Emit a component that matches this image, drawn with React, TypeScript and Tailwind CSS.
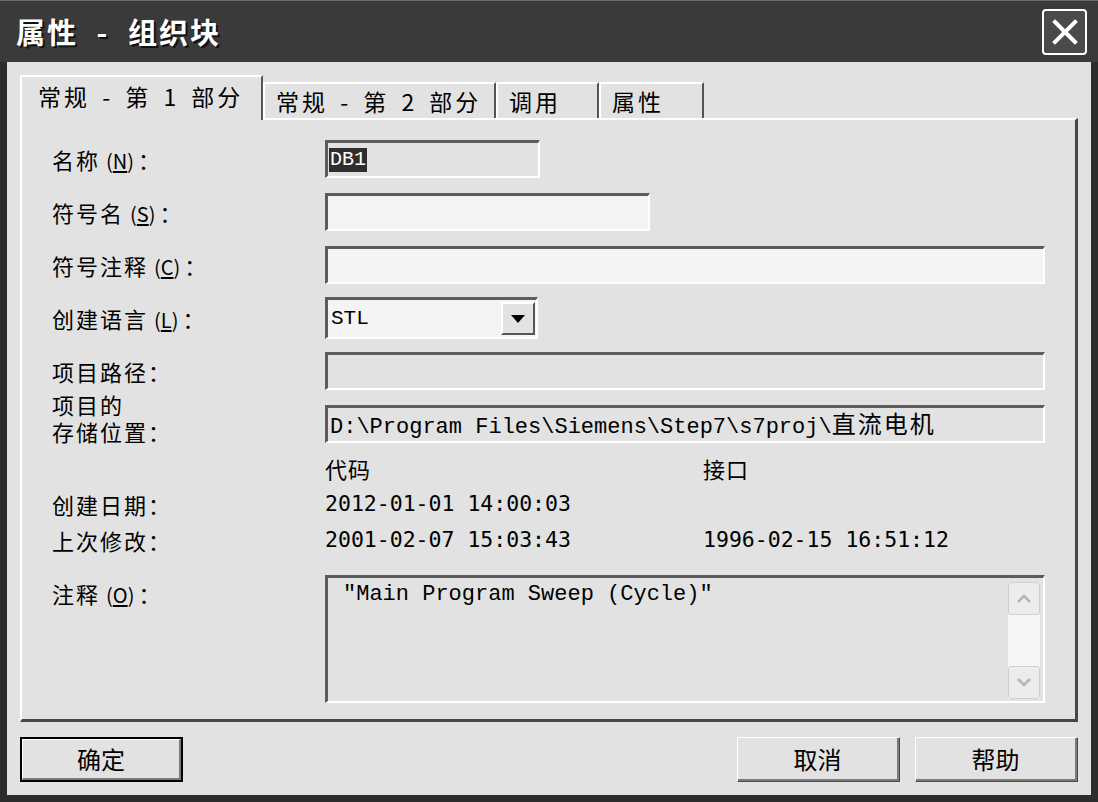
import { ReactNode } from "react";

const cjk = "font-['Noto_Sans_CJK_SC',sans-serif]";
const mono = "font-['Liberation_Mono','Noto_Sans_CJK_SC',monospace]";
const digits = "font-['DejaVu_Sans_Mono','Noto_Sans_CJK_SC',monospace]";

const sunken =
  "border-t-[3px] border-l-[3px] border-b-2 border-r-2 border-t-[#5c5c5c] border-l-[#5c5c5c] border-b-white border-r-white";

function Label({ children }: { children: ReactNode }) {
  return (
    <div className={`w-[273px] shrink-0 text-[22px] leading-none tracking-[2px] text-black ${cjk}`}>
      {children}
    </div>
  );
}

function Key({ k }: { k: string }) {
  return (
    <span className="ml-[6px] mr-[4px] text-[20px] tracking-normal">
      (<span className="underline underline-offset-2">{k}</span>)
    </span>
  );
}

function Row({ children }: { children: ReactNode }) {
  return <div className="flex h-[38px] items-center">{children}</div>;
}

function Btn({ children, primary }: { children: ReactNode; primary?: boolean }) {
  return (
    <button
      className={`flex h-[45px] w-[163px] items-center justify-center bg-[#e2e2e2] text-[24px] text-black ${cjk} ${
        primary ? "border-2 border-black" : "border border-[#4a4a4a] border-t-white border-l-white"
      }`}
    >
      <span
        className={`flex h-full w-full items-center justify-center border-b-2 border-r-2 border-b-[#7a7a7a] border-r-[#7a7a7a] ${
          primary ? "border-t border-l border-t-white border-l-white" : ""
        }`}
      >
        {children}
      </span>
    </button>
  );
}

export default function App() {
  const tabs = [
    { label: "常规 - 第 2 部分", w: "w-[233px]" },
    { label: "调用", w: "w-[103px]" },
    { label: "属性", w: "w-[105px]" },
  ];

  return (
    <div className="flex h-[802px] w-[1098px] flex-col bg-[#2c2c2c]">
      {/* title bar */}
      <div className="flex h-[62px] shrink-0 items-center justify-between border-t border-[#6a6a6a] bg-[#3a3a3a] pl-[16px] pr-[11px]">
        <span
          className={`text-[29px] font-bold leading-none tracking-[2px] text-white [word-spacing:10px] [text-shadow:2px_2px_0_#111] ${cjk}`}
        >
          属性 - 组织块
        </span>
        <div className="flex h-[46px] w-[45px] items-center justify-center rounded-[4px] border-2 border-white bg-[#4a4a4a]">
          <svg width="30" height="30" viewBox="0 0 30 30">
            <path d="M5 5 L25 25 M25 5 L5 25" stroke="white" strokeWidth="4" strokeLinecap="square" />
          </svg>
        </div>
      </div>

      {/* client area */}
      <div className="mx-[7px] mb-[7px] flex flex-1 flex-col bg-[#e2e2e2] px-[13px] pt-[13px] pb-[13px]">
        {/* tabs */}
        <div className="relative z-10 flex items-end">
          <div
            className={`-mb-[2px] flex h-[45px] w-[243px] items-center border-t-2 border-l-2 border-r-2 border-t-white border-l-white border-r-[#555] bg-[#e2e2e2] pl-[16px] pb-[4px] text-[23px] leading-none tracking-[3px] text-black [word-spacing:4px] ${cjk}`}
          >
            常规 - 第 1 部分
          </div>
          {tabs.map((t) => (
            <div
              key={t.label}
              className={`flex h-[36px] ${t.w} items-center border-t-2 border-l-2 border-r-2 border-t-white border-l-white border-r-[#555] pl-[11px] text-[23px] leading-none tracking-[3px] text-black [word-spacing:4px] ${cjk}`}
            >
              {t.label}
            </div>
          ))}
        </div>

        {/* panel */}
        <div className="flex h-[604px] flex-col border-t-2 border-l-2 border-r-[3px] border-b-[3px] border-t-white border-l-white border-r-[#474747] border-b-[#474747] pl-[30px] pt-[20px]">
          <div className="flex flex-col gap-[15px]">
            <Row>
              <Label>
                名称<Key k="N" />：
              </Label>
              <div className={`flex h-[38px] w-[215px] items-center ${sunken} bg-[#e2e2e2] pl-[1px]`}>
                <span className={`bg-[#2e2e2e] px-[1px] text-[20px] leading-[24px] text-white ${mono}`}>DB1</span>
              </div>
            </Row>
            <Row>
              <Label>
                符号名<Key k="S" />：
              </Label>
              <div className={`h-[38px] w-[325px] ${sunken} bg-[#f4f4f4]`} />
            </Row>
            <Row>
              <Label>
                符号注释<Key k="C" />：
              </Label>
              <div className={`h-[38px] w-[720px] ${sunken} bg-[#f4f4f4]`} />
            </Row>
            <Row>
              <Label>
                创建语言<Key k="L" />：
              </Label>
              <div className={`flex h-[42px] w-[213px] items-center justify-between ${sunken} bg-[#f4f4f4] pr-[1px]`}>
                <span className={`pl-[3px] text-[21px] leading-none text-black ${mono}`}>STL</span>
                <div className="flex h-[33px] w-[34px] items-center justify-center border-2 border-t-white border-l-white border-b-[#555] border-r-[#555] bg-[#e2e2e2]">
                  <svg width="14" height="8" viewBox="0 0 14 8">
                    <path d="M0 0 H14 L7 8 Z" fill="black" />
                  </svg>
                </div>
              </div>
            </Row>
            <Row>
              <Label>项目路径：</Label>
              <div className={`h-[38px] w-[720px] ${sunken} bg-[#e2e2e2]`} />
            </Row>
            <Row>
              <div
                className={`-mb-[2px] w-[273px] shrink-0 self-end text-[22px] leading-[27px] tracking-[2px] text-black ${cjk}`}
              >
                <div>项目的</div>
                <div>存储位置：</div>
              </div>
              <div className={`flex h-[38px] w-[720px] items-center ${sunken} bg-[#e2e2e2] pl-[2px]`}>
                <span className={`text-[22px] leading-none text-black ${mono}`}>
                  D:\Program Files\Siemens\Step7\s7proj\
                  <span className={`${cjk} text-[24px] tracking-[2px]`}>直流电机</span>
                </span>
              </div>
            </Row>
          </div>

          {/* dates */}
          <div className="mt-[7px] flex flex-col">
            <div className="flex h-[36px] items-center">
              <Label>{""}</Label>
              <div className={`w-[378px] text-[22px] leading-none tracking-[1px] text-black ${cjk}`}>代码</div>
              <div className={`text-[22px] leading-none tracking-[1px] text-black ${cjk}`}>接口</div>
            </div>
            <div className="flex h-[36px] items-center">
              <Label>创建日期：</Label>
              <div className={`w-[378px] text-[21.5px] leading-none text-black ${digits}`}>2012-01-01 14:00:03</div>
            </div>
            <div className="flex h-[36px] items-center">
              <Label>上次修改：</Label>
              <div className={`w-[378px] text-[21.5px] leading-none text-black ${digits}`}>2001-02-07 15:03:43</div>
              <div className={`text-[21.5px] leading-none text-black ${digits}`}>1996-02-15 16:51:12</div>
            </div>
          </div>

          {/* comment */}
          <div className="mt-[17px] flex">
            <div className="pt-[7px]">
              <Label>
                注释<Key k="O" />：
              </Label>
            </div>
            <div className={`flex h-[128px] w-[720px] ${sunken} bg-[#e2e2e2]`}>
              <div className={`flex-1 pl-[15px] pt-[6px] text-[22px] leading-none text-black ${mono}`}>
                "Main Program Sweep (Cycle)"
              </div>
              <div className="mr-[3px] mt-[4px] mb-[2px] flex w-[32px] flex-col justify-between bg-[#f6f6f6]">
                <div className="flex h-[33px] items-center justify-center rounded-[3px] border border-[#d0d0d0] bg-[#ececec]">
                  <svg width="14" height="9" viewBox="0 0 14 9">
                    <path d="M1 8 L7 2 L13 8" stroke="#b4b4b4" strokeWidth="2.5" fill="none" />
                  </svg>
                </div>
                <div className="flex h-[33px] items-center justify-center rounded-[3px] border border-[#d0d0d0] bg-[#ececec]">
                  <svg width="14" height="9" viewBox="0 0 14 9">
                    <path d="M1 1 L7 7 L13 1" stroke="#b4b4b4" strokeWidth="2.5" fill="none" />
                  </svg>
                </div>
              </div>
            </div>
          </div>
        </div>

        {/* buttons */}
        <div className="mt-[15px] flex justify-between">
          <Btn primary>确定</Btn>
          <div className="flex gap-[15px]">
            <Btn>取消</Btn>
            <Btn>帮助</Btn>
          </div>
        </div>
      </div>
    </div>
  );
}
